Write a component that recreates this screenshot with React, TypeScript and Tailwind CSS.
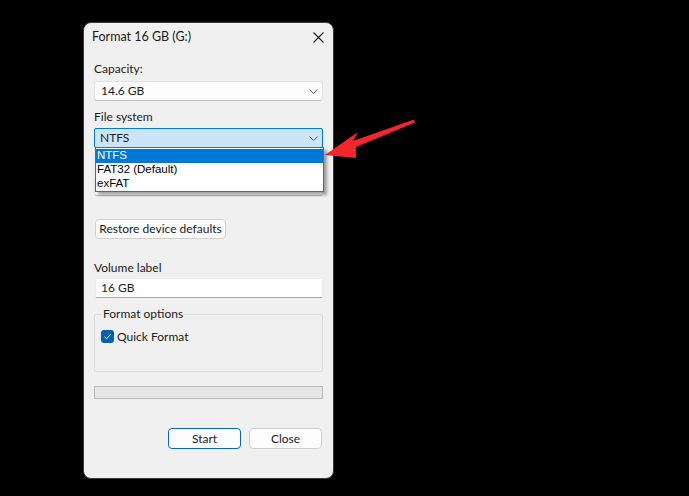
import * as React from "react"

const font = { fontFamily: 'Lato, "Noto Sans", sans-serif' }

// 下拉箭头
function Chevron() {
  return (
    <svg width="9" height="5" viewBox="0 0 9 5" className="shrink-0">
      <path d="M0.5 0.5 L4.5 4.5 L8.5 0.5" fill="none" stroke="#5f5f5f" strokeWidth="1" />
    </svg>
  )
}

function Combo({ value, focused }: { value: string; focused?: boolean }) {
  return (
    <div
      className={
        focused
          ? "h-[20px] flex items-center justify-between pl-[5px] pr-[4px] bg-[#cce4f7] border border-[#0078d7] rounded-[2px]"
          : "h-[20px] flex items-center justify-between pl-[6px] pr-[4px] bg-[#fdfdfd] border border-[#e3e3e3] border-b-[#bdbdbd] rounded-[3px]"
      }
    >
      <span className="text-[12px] leading-none text-[#1b1b1b]">{value}</span>
      <Chevron />
    </div>
  )
}

export default function App() {
  return (
    <div className="relative w-[689px] h-[496px] bg-black overflow-hidden" style={font}>
      <div className="ml-[83px] pt-[22px]">
        {/* 对话框窗口 */}
        <div className="w-[251px] bg-[#f0f0f0] rounded-[8px] border border-[#3a3a3a] flex flex-col">
          {/* 标题栏 */}
          <div className="h-[29px] flex items-center justify-between pl-[8px] pr-[9px]">
            <span className="text-[12.5px] text-[#1b1b1b] leading-none">Format 16 GB (G:)</span>
            <svg width="11" height="11" viewBox="0 0 11 11">
              <path d="M0.5 0.5 L10.5 10.5 M10.5 0.5 L0.5 10.5" stroke="#1b1b1b" strokeWidth="1.1" />
            </svg>
          </div>

          <div className="flex flex-col px-[10px] pb-[29px] text-[#1b1b1b]">
            <div className="mt-[9px] text-[12px] leading-[16px]">Capacity:</div>
            <div className="mt-[4px]">
              <Combo value="14.6 GB" />
            </div>

            <div className="mt-[8px] text-[12px] leading-[16px]">File system</div>
            <div className="relative mt-[3px]">
              <Combo value="NTFS" focused />
              {/* 展开的下拉列表 */}
              <div
                className="absolute left-[1px] right-[-1px] top-[19px] z-10 bg-white border border-[#646464] shadow-[3px_3px_3px_rgba(0,0,0,0.35)] flex flex-col py-[1px]"
                style={{ fontFamily: '"Liberation Sans", Arial, sans-serif' }}
              >
                <div className="h-[14px] flex items-center pl-[1px] bg-[#0078d7] text-white text-[11.5px]">NTFS</div>
                <div className="h-[14px] flex items-center pl-[1px] text-black text-[11.5px]">FAT32 (Default)</div>
                <div className="h-[13px] flex items-center pl-[1px] text-black text-[11.5px]">exFAT</div>
              </div>
            </div>

            {/* 被列表遮住的分配单元大小 */}
            <div className="mt-[10px] h-[16px]" />
            <div className="mt-[2px] h-[20px] bg-[#fdfdfd] border border-[#e3e3e3] border-b-[#bdbdbd] rounded-[3px]" />

            <div className="mt-[23px] flex">
              <button className="h-[20px] w-[131px] ml-[1px] bg-[#fdfdfd] border border-[#d0d0d0] rounded-[4px] text-[12px] leading-none text-[#1b1b1b] whitespace-nowrap">
                Restore device defaults
              </button>
            </div>

            <div className="mt-[21px] text-[12px] leading-[16px]">Volume label</div>
            <div className="mt-[2px] h-[20px] ml-[1px] flex items-center pl-[5px] bg-white border border-[#ececec] border-b-[#a8a8a8] rounded-[2px]">
              <span className="text-[12px] leading-none">16 GB</span>
            </div>

            {/* 格式化选项分组 */}
            <div className="relative mt-[16px] h-[58px] border border-[#dcdcdc] rounded-[2px]">
              <span className="absolute left-[7px] top-[-9px] px-[1px] bg-[#f0f0f0] text-[12px] leading-[16px]">
                Format options
              </span>
              <div className="flex items-center gap-[3px] mt-[15px] ml-[6px]">
                <div className="w-[13px] h-[13px] rounded-[3px] bg-[#005fb8] flex items-center justify-center">
                  <svg width="9" height="9" viewBox="0 0 9 9">
                    <path d="M1.5 4.8 L3.6 6.8 L7.6 2.2" fill="none" stroke="white" strokeWidth="1" />
                  </svg>
                </div>
                <span className="text-[12px] leading-none">Quick Format</span>
              </div>
            </div>

            {/* 进度条 */}
            <div className="mt-[14px] h-[13px] bg-[#e6e6e6] border border-[#bcbcbc]" />

            <div className="mt-[29px] flex justify-end gap-[8px] mr-[1px]">
              <button className="h-[21px] w-[73px] bg-[#fdfdfd] border border-[#0067c0] rounded-[4px] text-[12px] leading-none">
                Start
              </button>
              <button className="h-[21px] w-[73px] bg-[#fdfdfd] border border-[#d0d0d0] rounded-[4px] text-[12px] leading-none">
                Close
              </button>
            </div>
          </div>
        </div>
      </div>

      {/* 红色指示箭头 */}
      <svg className="absolute left-0 top-0 pointer-events-none" width="689" height="496" viewBox="0 0 689 496">
        <polygon
          points="325,155 358,132 353,141 414,119.5 415,122.5 356,147 356,158"
          fill="#f2272c"
        />
      </svg>
    </div>
  )
}
